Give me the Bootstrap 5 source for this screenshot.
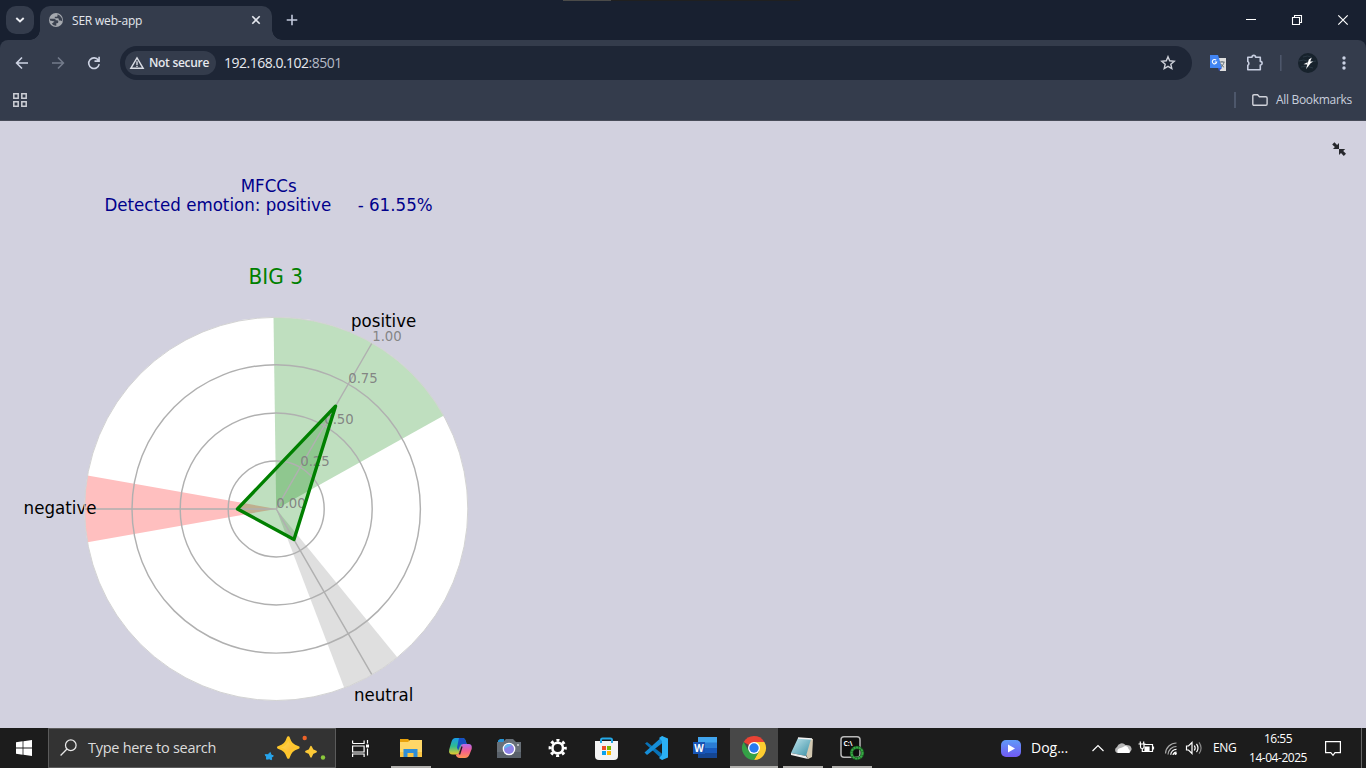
<!DOCTYPE html>
<html lang="en">
<head>
<meta charset="utf-8">
<meta name="viewport" content="width=device-width, initial-scale=1">
<title>SER web-app</title>
<link href="https://cdn.jsdelivr.net/npm/bootstrap@5.3.0/dist/css/bootstrap.min.css" rel="stylesheet">
<style>
html,body{height:100%;overflow:hidden}
body{font-family:"Open Sans","Noto Sans",sans-serif;background:#d2d1df;font-size:12px;line-height:1}
svg{display:block;flex:none}
.titlebar{height:40px;background:#182030;color:#e3e6ec}
.sliver{position:absolute;top:0;left:563px;width:237px;height:1px;background:linear-gradient(90deg,#4b4b49 48px,#202020 48px)}
.tab-search{width:28px;height:28px;border-radius:10px;background:#343c4c;margin:6px 6px 0 6px}
.tab-active{width:232px;height:34px;margin-top:6px;background:#343c4c;border-radius:10px 10px 0 0;position:relative}
.tab-active:before,.tab-active:after{content:"";position:absolute;bottom:0;width:10px;height:10px}
.tab-active:before{left:-10px;background:radial-gradient(circle at 0 0,transparent 9.5px,#343c4c 10px)}
.tab-active:after{right:-10px;background:radial-gradient(circle at 100% 0,transparent 9.5px,#343c4c 10px)}
.chrome-body{background:#182030}
.toolbar{height:46px;background:#343c4c;border-radius:8px 8px 0 0;color:#cdd3e3}
.omnibox{width:1072px;height:34px;border-radius:17px;background:#1e2636;margin-left:16px;padding-left:5px}
.chip{width:91px;height:24px;border-radius:12px;background:#343c4c;color:#e6e8ee;font-weight:600;font-size:12px;letter-spacing:-.3px}
.url{font-size:14px;letter-spacing:-.5px;color:#e8eaf0}
.url span{color:#b5bac6}
.bookmarks{height:35px;background:#343c4c;border-bottom:1px solid #474b58;color:#c9cfdd;padding-bottom:6px}
.vline{width:2px;height:16px;background:#4d576b}
.page{height:607px}
.taskbar{height:40px;background:#1c1c1c;color:#fff}
.searchbox{width:288px;height:40px;background:#333;border:1px solid #5b5b5b;font-size:15px;color:#dcdcdc}
.task{width:49px;height:40px;position:relative}
.task.running:after{content:"";position:absolute;left:4px;bottom:0;width:40px;height:2px;background:#b0afac}
.task.current{background:#484848;width:48px;margin-right:1px}
.task.current:after{left:0;width:48px}
.fit{white-space:nowrap}
</style>
</head>
<body class="d-flex flex-column m-0">
<header class="titlebar d-flex position-relative">
  <div class="sliver"></div>
  <div class="tab-search d-flex align-items-center justify-content-center"><svg width="10" height="8" viewBox="0 0 10 8"><path d="M1.3 2 5 5.5 8.700 2" fill="none" stroke="#eceef3" stroke-width="1.900"/></svg></div>
  <div class="tab-active d-flex align-items-center">
    <svg class="ms-2" style="margin-top:-6px" width="16" height="16" viewBox="0 0 16 16"><circle cx="8" cy="8" r="7" fill="#a5a9af"/><path d="M1.800 6.800H6.500q1.300.2 1.300 1.500h1.500q1 .2 1 1.200v.8q-.2 1-1.200 1h-.8v2.500q-2.600.2-4.500-2L6.500 9.500 2 8.500zM9.500 2.200v1.500q0 1-1 1H6.800v1.500h3q1 0 1 1v1.200h1.700l1.800.8q.3-4.600-4.800-7z" fill="#3b4250"/></svg>
    <span class="fit" style="margin:-5px 0 0 8px;letter-spacing:-.19px">SER web-app</span>
    <svg class="ms-auto" style="margin:-6px 11px 0 0" width="10" height="10" viewBox="0 0 10 10"><path d="M1.300 1.300 8.700 8.700M8.700 1.300 1.300 8.700" stroke="#e4e7ee" stroke-width="1.600"/></svg>
  </div>
  <svg style="margin:14px 0 0 14px" width="12" height="12" viewBox="0 0 12 12"><path d="M6 .7v10.600M.7 6h10.600" stroke="#c2c9dc" stroke-width="1.600"/></svg>
  <div class="ms-auto d-flex align-items-center">
    <svg width="126" height="40" viewBox="1240 0 126 40" fill="none" stroke="#fff"><path d="M1246 19.500h10"/><path d="M1292.500 17.500h7v7h-7zM1294.500 17.500v-2h7v7h-2" stroke-width="1.100"/><path d="m1338.300 15.300 9.400 9.400M1347.700 15.300l-9.400 9.400" stroke-width="1.200"/></svg>
  </div>
</header>
<div class="chrome-body">
<nav class="toolbar d-flex align-items-center">
  <svg width="104" height="46" viewBox="0 40 104 46" fill="none" stroke="#cdd3e3" stroke-width="1.600"><path d="M28 63H17M22 57.500 16.600 63l5.400 5.500"/><path d="M52 63h11M58 57.500l5.400 5.500-5.400 5.500" stroke="#737b8b"/><path d="M98.400 60.200A5.300 5.300 0 1 0 99.200 64.200M99.100 56.800v4.300h-4.600"/></svg>
  <div class="omnibox d-flex align-items-center">
    <div class="chip d-flex align-items-center"><svg class="ms-1" style="margin-right:4px" width="16" height="14" viewBox="0 0 16 14" fill="none" stroke="#d8dbe3" stroke-width="1.400"><path d="M8 1.800 14.200 12.300H1.800z"/><path d="M8 5.300v3.600M8 9.700v1.400"/></svg><span class="fit">Not secure</span></div>
    <span class="url fit" style="margin-left:8px">192.168.0.102<span>:8501</span></span>
    <svg class="ms-auto" style="margin-right:16px" width="16" height="16" viewBox="0 0 16 16"><path d="m8 1.700 1.700 4.100 4.500.4-3.400 3 1 4.400L8 11.300l-3.800 2.300 1-4.400-3.400-3 4.500-.4z" fill="none" stroke="#cdd0d9" stroke-width="1.400"/></svg>
  </div>
  <svg width="174" height="46" viewBox="1192 40 174 46">
    <path d="M1217 58h9v13h-6z" fill="#dedede"/><path d="M1210 55h8l4 13h-12z" fill="#4285f4"/><path d="M1218 68h4l-3 3z" fill="#3657cf"/>
    <path d="M1216.200 60.200a2.200 2.200 0 1 0 .5 1.800h-2" fill="none" stroke="#fff" stroke-width="1.100"/><path d="M1219.500 62h5M1222 61v1M1224 62c-.4 2.500-1.800 4-3 4.700M1220.600 63.700c.9 1.500 2 2.800 3.500 3.600" stroke="#65737b" fill="none"/>
    <path d="M1247.800 57.200h4.200a1.800 1.800 0 0 1 3.600 0h4.700v4.200a1.800 1.800 0 0 1 0 3.600v4.700h-12.500v-4.300a2.400 2.400 0 0 0 0-4z" fill="none" stroke="#c7cee0" stroke-width="1.600" stroke-linejoin="round"/>
    <path d="M1280 55h1.600v16h-1.600z" fill="#4d576b"/>
    <circle cx="1308" cy="63" r="10" fill="#17222c"/><path d="M1299 61q5-2 8 0t9 0M1301 67q6-2 12 1M1303 57q5-2 8 0" stroke="#293844" fill="none"/><path d="M1311.800 57.500 1308.800 59.500 1306 69.200l4.600-6 2.600-1.600h-3zM1303.500 64.300l4-2 .6 1.700z" fill="#fff"/>
    <g fill="#cbd2e4"><circle cx="1344" cy="58" r="1.700"/><circle cx="1344" cy="63" r="1.700"/><circle cx="1344" cy="68" r="1.700"/></g>
  </svg>
</nav>
<div class="bookmarks d-flex align-items-center">
  <svg style="margin-left:13px" width="14" height="14" viewBox="0 0 14 14" fill="none" stroke="#ccced5" stroke-width="1.500"><path d="M.8.8h4.400v4.400H.8zM8.800.8h4.400v4.400H8.800zM.8 8.800h4.400v4.400H.8zM8.800 8.800h4.400v4.400H8.800z"/></svg>
  <div class="vline ms-auto"></div>
  <svg style="margin:0 8px 0 16px" width="16" height="12" viewBox="0 0 16 12" fill="none" stroke="#d0d2da" stroke-width="1.400"><path d="M.8 10V2Q.8.8 2 .8h3.600l1.800 2h6.400q1.300 0 1.300 1.200v6q0 1.200-1.300 1.200H2Q.8 11.200.8 10z"/></svg>
  <span class="fit" style="margin-right:14px;letter-spacing:-.3px">All Bookmarks</span>
</div>
</div>
<main class="page d-flex justify-content-between">
  <svg width="490" height="607" viewBox="0 121 490 607" font-family="DejaVu Sans, sans-serif">
    <g fill="#00008b" font-size="17.200">
      <text x="240.700" y="192" textLength="56" lengthAdjust="spacingAndGlyphs">MFCCs</text>
      <text x="104.400" y="211.400" textLength="328.200" lengthAdjust="spacingAndGlyphs">Detected emotion: positive&#160;&#160;&#160;&#160;&#160;- 61.55%</text>
    </g>
    <text x="248.500" y="284" textLength="54.500" lengthAdjust="spacingAndGlyphs" font-size="20.500" fill="#008000">BIG 3</text>
    <circle cx="276.200" cy="508.900" r="191.600" fill="#fff"/>
    <path d="M276.200 508.900 273.500 317.300A191.600 191.600 0 0 1 443.900 415.600z" fill="#bfdfbf"/>
    <path d="M276.200 508.900 87.500 542.300A191.600 191.600 0 0 1 87.500 475.400z" fill="#ffbfbf"/>
    <path d="M276.200 508.900 397.200 657.200A191.600 191.600 0 0 1 344.300 688z" fill="#dfdfdf"/>
    <path d="M335.500 406.200 237.500 508.900 294 539.500z" fill="#008000" fill-opacity=".25"/>
    <g fill="none" stroke="#b0b0b0" stroke-width="1.450">
      <circle cx="276.200" cy="508.900" r="48"/><circle cx="276.200" cy="508.900" r="96"/><circle cx="276.200" cy="508.900" r="144.200"/>
      <path d="M276.200 508.900 372 343M276.200 508.900H84.800M276.200 508.900 372 674.800"/>
    </g>
    <g font-size="13.600" fill="#808080" fill-opacity=".95">
      <text x="276.200" y="507.600" textLength="29.600" lengthAdjust="spacingAndGlyphs">0.00</text><text x="300.200" y="466" textLength="29.600" lengthAdjust="spacingAndGlyphs">0.25</text><text x="324.200" y="424.200" textLength="29.600" lengthAdjust="spacingAndGlyphs">0.50</text><text x="348.200" y="382.500" textLength="29.600" lengthAdjust="spacingAndGlyphs">0.75</text><text x="372.200" y="341" textLength="29.600" lengthAdjust="spacingAndGlyphs">1.00</text>
    </g>
    <g font-size="17.200" fill="#000">
      <text x="351" y="327.300" textLength="65.200" lengthAdjust="spacingAndGlyphs">positive</text>
      <text x="23.600" y="514.200" textLength="73" lengthAdjust="spacingAndGlyphs">negative</text>
      <text x="354" y="701" textLength="59.300" lengthAdjust="spacingAndGlyphs">neutral</text>
    </g>
    <path d="M335.500 406.200 237.500 508.900 294 539.500z" fill="none" stroke="#008000" stroke-width="3.400" stroke-linejoin="round"/>
    <circle cx="276.200" cy="508.900" r="191.600" fill="none" stroke="#d3d3d3" stroke-width="1"/>
  </svg>
  <svg style="margin:21px 20px 0 0" width="14" height="14" viewBox="0 0 14 14" fill="#26272c"><path d="M7 7V1L5.100 2.900 2.400.2.200 2.400l2.700 2.700L1 7zM7 7h6.200l-2 2 2.800 2.700-2.200 2.200L9 11.100l-2 2z"/></svg>
</main>
<footer class="taskbar d-flex align-items-center">
  <div class="d-flex justify-content-center" style="width:48px"><svg width="16" height="16" viewBox="0 0 16 16" fill="#fff"><path d="M0 2.200 6.600 1.300v6.200H0zM7.400 1.200 16 0v7.500H7.400zM0 8.400h6.600v6.300L0 13.800zM7.400 8.400H16V16l-8.600-1.200z"/></svg></div>
  <div class="searchbox d-flex align-items-center">
    <svg style="margin-left:11px" width="17" height="18" viewBox="0 0 17 18" fill="none" stroke="#e8e8e8" stroke-width="1.250"><circle cx="10.800" cy="6.200" r="5.300"/><path d="M7 10 .6 16.500"/></svg>
    <span class="fit" style="margin-left:11px;font-size:14.500px;letter-spacing:-.28px">Type here to search</span>
    <svg class="ms-auto" style="margin-right:9px" width="62" height="30" viewBox="264 733 62 30"><defs><linearGradient id="gold" x2="1" y2="1"><stop stop-color="#ffe45e"/><stop offset="1" stop-color="#fca61c"/></linearGradient></defs><g stroke-linejoin="round"><path d="M288.300 737.500c2 6 4 8 10 10-6 2-8 4-10 10-2-6-4-8-10-10 6-2 8-4 10-10z" fill="url(#gold)" stroke="#fdc62c" stroke-width="2.600"/><path d="m311 746.800 1.700 3.300 3.300 1.500-3.300 1.600-1.700 3.500-1.600-3.500-3.400-1.600 3.400-1.500z" fill="#fcc937" stroke="#fcc937" stroke-width="1.800"/><path d="m270.300 752.500.6 2.300 2.500 1.100-1.900 1.600.1 2.200-2.400-.9-2.600.4 0-2.300-1.500-2.200h2.800z" fill="#27a5ed" stroke="#27a5ed" stroke-width="1"/></g><circle cx="304.700" cy="738" r="2.200" fill="#ef6328"/><circle cx="323" cy="757.500" r="2.200" fill="#8bc83c"/></svg>
  </div>
  <svg width="51" height="40" viewBox="336 728 51 40" fill="none" stroke="#fff" stroke-width="1.200"><path d="M352.600 743.500v-3M352.600 743.500h11.500v-3M352.600 746h11.500v6h-11.500zM352.600 757v-3h11.500v3M367.500 740v3.500M367.500 748.500v7"/><path d="M366 744.500h3v3h-3z" fill="#fff" stroke="none"/></svg>
  <div class="task running"><svg width="49" height="40" viewBox="387 728 49 40"><path d="M400 739h8l2 2h11v4h-21z" fill="#e9a20b"/><path d="M400 742h8l2-2h12v17h-22z" fill="#ffd767"/><path d="M400 752h22v5h-22z" fill="#fac544"/><path d="M403.500 757v-8h14v8h-4v-4h-6v4z" fill="#2e8ed7"/></svg></div>
  <div class="task"><svg width="49" height="40" viewBox="436 728 49 40"><defs><linearGradient id="ca" x1="0" y1="0" x2="0" y2="1"><stop stop-color="#189bea"/><stop offset=".5" stop-color="#2fbb8e"/><stop offset="1" stop-color="#e7c92b"/></linearGradient><linearGradient id="cb" x1="0" y1="0" x2="0" y2="1"><stop stop-color="#b569ef"/><stop offset=".5" stop-color="#f35e8d"/><stop offset="1" stop-color="#ff9352"/></linearGradient></defs><path d="M455.500 738h7q2.500 0 3.200 3l1 3h-4l-4.500 10.500h-5.500q-4.500 0-3.500-5l2.200-7.500q1.100-4 4.100-4z" fill="url(#ca)"/><path d="M459 738h3.500q2.500 0 3.200 3l1 3h-4.200q-2.200.2-3 3l-1.300 3.500-1.200-3z" fill="#174fc4"/><path d="M463 744h5.500q4 0 3.200 5l-2.400 6q-1.300 3-4.300 3h-5.500q-3-.2-3.800-3.500 2.900.3 3.800-3l1-4.500q.6-2.800 2.500-3z" fill="url(#cb)"/><path d="m462 746.500-2.500 8" stroke="#1c1c1c" stroke-width="1.300"/></svg></div>
  <div class="task"><svg width="49" height="40" viewBox="485 728 49 40"><path d="M498 742v-1.500l2-1.500h4v4z" fill="#2595d7"/><path d="M497 742h6l3-3h7l3 3h5v16h-24z" fill="#687078"/><path d="M497 752h24v6h-24z" fill="#59616a"/><circle cx="509" cy="749" r="6.300" fill="#fff"/><circle cx="509" cy="749" r="5" fill="#8e82e6"/><path d="M504 749a5 5 0 0 1 8-4z" fill="#62b7ef"/><circle cx="518" cy="745" r="1" fill="#d1d5d8"/></svg></div>
  <div class="task"><svg width="49" height="40" viewBox="534 728 49 40" fill="none" stroke="#fff"><circle cx="557.700" cy="748" r="5.300" stroke-width="2.600"/><circle cx="557.700" cy="748" r="7.700" stroke-width="2.800" stroke-dasharray="3 3.048" stroke-dashoffset="1.500"/></svg></div>
  <div class="task"><svg width="49" height="40" viewBox="583 728 49 40"><path d="M601 743v-3q0-1.500 1.500-1.500h8q1.500 0 1.500 1.500v3" fill="none" stroke="#24a9e8" stroke-width="2"/><path d="M595 741h23v15q0 4-4 4h-15q-4 0-4-4z" fill="#f4f4f4"/><path d="M601 741v2M612 741v2" stroke="#24a9e8" stroke-width="2"/><path d="M602 746h4v4h-4z" fill="#f04e25"/><path d="M607 746h4v4h-4z" fill="#7cb900"/><path d="M602 751h4v4h-4z" fill="#0aa3ee"/><path d="M607 751h4v4h-4z" fill="#fdb900"/></svg></div>
  <div class="task"><svg width="49" height="40" viewBox="632 728 49 40"><path d="m645 743.500 2-1.500 16 12.500v5.500z" fill="#0873b8"/><path d="m644.500 752.500 2.500 2.500 16-12.500V736z" fill="#168ed8"/><path d="m662 736 6 2.500v19l-6 2.500-3-2 3-3v-14l-3-3z" fill="#2bb1f5"/></svg></div>
  <div class="task"><svg width="49" height="40" viewBox="681 728 49 40"><path d="M698 737h19v6h-19z" fill="#41a5ee"/><path d="M698 742.500h19v5.500h-19z" fill="#2b7cd3"/><path d="M698 748h19v5h-19z" fill="#185abd"/><path d="M698 753h19v5h-19z" fill="#154693"/><path d="M693 742h12v12h-12z" fill="#1754b5"/><text x="694.300" y="751.800" font-size="10" font-weight="700" fill="#fff" textLength="9.500" lengthAdjust="spacingAndGlyphs">W</text></svg></div>
  <div class="task running current"><svg width="48" height="40" viewBox="730 728 48 40"><path d="M754 748 743.600 742A12 12 0 0 1 764.400 742z" fill="#ea4335"/><path d="M754 742h10.400A12 12 0 0 1 754 760l5-9z" fill="#fdcc30"/><path d="M743.600 742 748.800 751 754 754 759.200 751 754 760A12 12 0 0 1 743.600 742z" fill="#34a146"/><circle cx="754" cy="748" r="6" fill="#fff"/><circle cx="754" cy="748" r="4.700" fill="#277af0"/></svg></div>
  <div class="task running"><svg width="49" height="40" viewBox="779 728 49 40"><defs><linearGradient id="note" x2="1" y2="1"><stop stop-color="#c5e8ef"/><stop offset="1" stop-color="#398fa5"/></linearGradient></defs><path d="m798 738 15 1-1 18-4 2z" fill="#d2c8b1"/><path d="m798 738 13 1-5 17-15-3z" fill="url(#note)"/><path d="m791 753 15 3 2 3-17-4z" fill="#eee"/><path d="m798 738 14 1" stroke="#f4f4f4" stroke-width="1.500"/></svg></div>
  <div class="task running"><svg width="49" height="40" viewBox="828 728 49 40"><rect x="841" y="736.700" width="19" height="20.500" rx="3" fill="#101010" stroke="#b9b9b9" stroke-width="1.500"/><text x="843.500" y="745.500" font-size="6.500" font-weight="700" fill="#fff" textLength="9" lengthAdjust="spacingAndGlyphs">C:\</text><circle cx="857" cy="753" r="5.500" fill="none" stroke="#164c1c" stroke-width="3.500"/><circle cx="857" cy="753" r="5.500" fill="none" stroke="#36a844" stroke-width="2.200" stroke-dasharray="2.200 .5"/></svg></div>
  <div class="ms-auto d-flex align-items-center">
    <svg width="20" height="17" viewBox="0 0 20 17"><defs><linearGradient id="play" y2="1" x2="0"><stop stop-color="#609af8"/><stop offset="1" stop-color="#7159f3"/></linearGradient></defs><rect width="20" height="17" rx="5" fill="url(#play)"/><path d="m7 4.500 7 4-7 4z" fill="#fff"/></svg>
    <span class="fit" style="margin-left:10px;width:60px;font-size:14px">Dog...</span>
    <svg width="114" height="40" viewBox="1092 728 114 40" fill="none" stroke="#fff" stroke-width="1.200"><path d="m1093.500 751 5.500-5.500 5.500 5.500"/><path d="M1118 753a4 3.500 0 0 1 0-6 5 5 0 0 1 8.500-2 5 4 0 0 1 2 8z" fill="#b7b7b7" stroke="none"/><path d="M1119 753a3 3 0 0 1 1-4.500q3-1 6-2.500 3 0 3.500 3 2 1 1 4z" fill="#fff" stroke="none"/><path d="M1144.500 744.500h9v7h-9M1154.500 746.500v3M1141.500 744v3q0 1.500 1.500 1.500M1145 744v3q0 1.500-1.700 1.500v3h1.500M1139.500 744h7M1141.300 744v-2.500M1144.700 744v-2.500"/><path d="M1146 747h4v3.500h-4z" fill="#fff"/><g stroke="#aaa"><path d="M1166.500 753.500a11 11 0 0 1 11-10.500M1169 754.500a8.500 8.500 0 0 1 8.500-8"/><path d="M1171.700 754.700a5.600 5.600 0 0 1 5.800-5.300M1174 755a3.600 3.600 0 0 1 3.500-3" stroke="#fff"/></g><circle cx="1176.500" cy="753.600" r="1.300" fill="#fff" stroke="none"/><path d="M1187.500 746h2l3.500-3.500v11l-3.500-3.500h-2zM1195.300 745.500q1.700 2.500 0 5M1197.500 743.800q3 4.200 0 8.400"/><path d="M1200 742.300q4.200 5.700 0 11.400" stroke="#888"/></svg>
    <span class="fit" style="margin-left:8px;width:33px;letter-spacing:-.4px">ENG</span>
    <div class="d-flex flex-column align-items-center justify-content-between" style="width:64px;height:31px;letter-spacing:-.47px;margin-right:15px"><span class="fit">16:55</span><span class="fit">14-04-2025</span></div>
    <svg width="16" height="17" viewBox="0 0 16 17"><path d="M.6 1.600h14.800v11H10L8 15.300l-2.200-2.700H.6z" fill="none" stroke="#fff" stroke-width="1.200"/></svg>
    <div style="width:1px;height:40px;background:#666;margin:0 4px 0 20px"></div>
  </div>
</footer>
<script src="https://cdn.jsdelivr.net/npm/bootstrap@5.3.0/dist/js/bootstrap.bundle.min.js"></script>
</body>
</html>
